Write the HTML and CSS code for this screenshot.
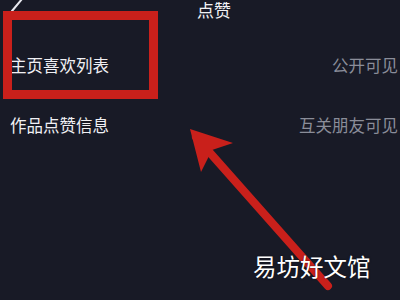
FILE: index.html
```html
<!DOCTYPE html>
<html>
<head>
<meta http-equiv="Content-Type" content="text/html; charset=utf-8"/>
<title>点赞</title>
<link rel="stylesheet" href="styles.css">
</head>
<body>
<div class="screen">
  <div class="header">
    <svg class="back" width="24" height="20" viewBox="0 0 24 20">
      <path d="M12 11 L22 -1" stroke="#e8e8ee" stroke-width="2" fill="none" stroke-linecap="round"/>
    </svg>
    <div class="title">点赞</div>
  </div>

  <div class="list">
    <div class="row">
      <span class="label">主页喜欢列表</span>
      <span class="value">公开可见</span>
    </div>
    <div class="row">
      <span class="label">作品点赞信息</span>
      <span class="value">互关朋友可见</span>
    </div>
  </div>

  <!-- annotations drawn over the screenshot -->
  <div class="mark-box"></div>
  <svg class="mark-arrow" width="400" height="300" viewBox="0 0 400 300">
    <path d="M196 137 L328 286" stroke="#c9201b" stroke-width="8" stroke-linecap="round" fill="none"/>
    <path d="M190 129 L233 143 L212 150 L201 172 Z" fill="#c9201b"/>
  </svg>
  <div class="watermark">易坊好文馆</div>
</div>
</body>
</html>
```

FILE: styles.css
```css
body {
  margin: 0;
  background-color: #181a26;
  font-family: "Noto Sans CJK SC", "Noto Sans", sans-serif;
}

.screen {
  position: relative;
  width: 400px;
  height: 300px;
  overflow: hidden;
  background-color: #181a26;
}

.header {
  height: 20px;
  display: flex;
  align-items: center;
}

.back {
  display: block;
}

.title {
  margin-left: 173px;
  color: #f2f2f5;
  font-size: 17px;
  line-height: 20px;
}

.list {
  padding-top: 15px;
}

.row {
  height: 60px;
  display: flex;
  align-items: center;
  justify-content: space-between;
  padding: 0 2px 0 10px;
}

.label {
  color: #f0f0f4;
  font-size: 16.5px;
}

.value {
  color: #8a8d99;
  font-size: 16.5px;
}

.mark-box {
  position: absolute;
  left: 3px;
  top: 11px;
  width: 137px;
  height: 70px;
  border: 9px solid #c9201b;
}

.mark-arrow {
  position: absolute;
  left: 0;
  top: 0;
}

.watermark {
  position: absolute;
  left: 253px;
  top: 250px;
  color: #ffffff;
  font-size: 23.5px;
  line-height: 32px;
  text-shadow: 0 0 2px rgba(0, 0, 0, 0.6);
}
```
